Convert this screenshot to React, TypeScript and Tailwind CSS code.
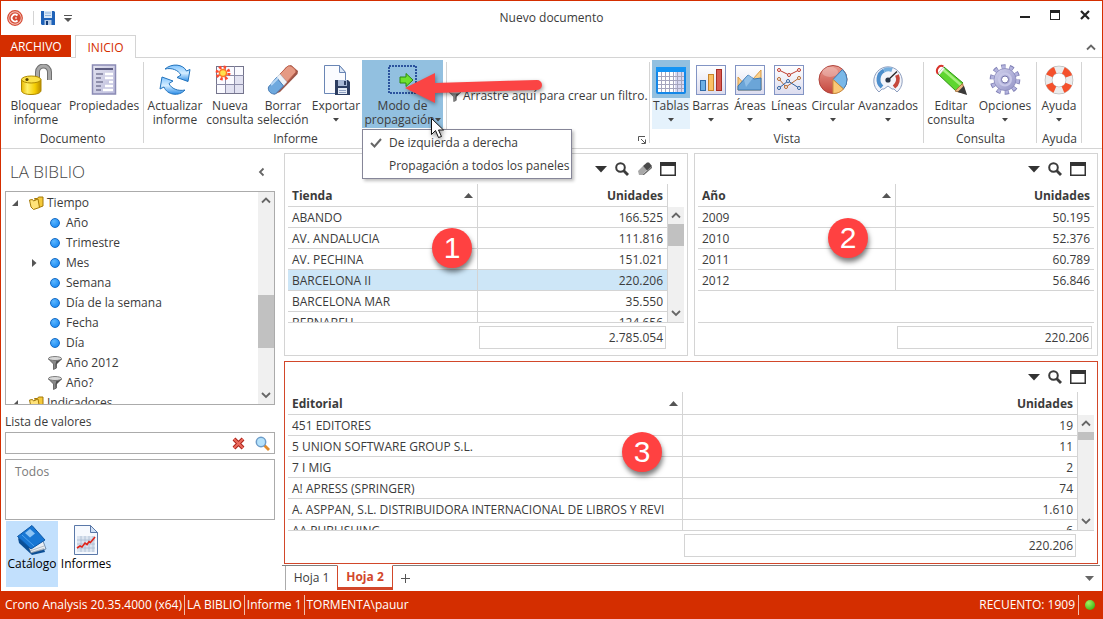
import React, { useState } from 'react';
import { clsx } from 'clsx';

type Row = { name: string; value: string };

interface GridPanelProps {
  column: string;
  rows: Row[];
  total: string;
  badge: string;
  badgeClass: string;
  selected?: string;
  thumbClass?: string;
  active?: boolean;
  eraser?: boolean;
  className?: string;
}

const tiendas: Row[] = [
  { name: 'ABANDO', value: '166.525' },
  { name: 'AV. ANDALUCIA', value: '111.816' },
  { name: 'AV. PECHINA', value: '151.021' },
  { name: 'BARCELONA II', value: '220.206' },
  { name: 'BARCELONA MAR', value: '35.550' },
  { name: 'BERNABEU', value: '124.656' },
];

const anios: Row[] = [
  { name: '2009', value: '50.195' },
  { name: '2010', value: '52.376' },
  { name: '2011', value: '60.789' },
  { name: '2012', value: '56.846' },
];

const editoriales: Row[] = [
  { name: '451 EDITORES', value: '19' },
  { name: '5 UNION SOFTWARE GROUP S.L.', value: '11' },
  { name: '7 I MIG', value: '2' },
  { name: 'A! APRESS (SPRINGER)', value: '74' },
  { name: 'A. ASPPAN, S.L. DISTRIBUIDORA INTERNACIONAL DE LIBROS Y REVI', value: '1.610' },
  { name: 'AA PUBLISHING', value: '6' },
];

const treeItems = [
  { label: 'Año', kind: 'dot' },
  { label: 'Trimestre', kind: 'dot' },
  { label: 'Mes', kind: 'dot', expandable: true },
  { label: 'Semana', kind: 'dot' },
  { label: 'Día de la semana', kind: 'dot' },
  { label: 'Fecha', kind: 'dot' },
  { label: 'Día', kind: 'dot' },
  { label: 'Año 2012', kind: 'filter' },
  { label: 'Año?', kind: 'filter' },
];

/* ---------- Ribbon icons (32x32) ---------- */

function Icon32({ children }: { children: React.ReactNode }) {
  return (
    <svg width="32" height="32" viewBox="0 0 32 32" className="block shrink-0" aria-hidden="true">
      {children}
    </svg>
  );
}

function LockIcon() {
  return (
    <Icon32>
      <defs>
        <linearGradient id="gold" x1="0" x2="1">
          <stop offset="0" stopColor="#e8b800" />
          <stop offset="0.3" stopColor="#fff06a" />
          <stop offset="0.7" stopColor="#f5cd00" />
          <stop offset="1" stopColor="#b88a00" />
        </linearGradient>
      </defs>
      <path d="M17.500 15V8a5.500 5.500 0 0 1 12 0v8" fill="none" stroke="#6f6f6f" strokeWidth="5" />
      <path d="M17.500 15V8a5.500 5.500 0 0 1 12 0v8" fill="none" stroke="#a9a9a9" strokeWidth="3" />
      <path d="M1.500 15.500v11c0 2.500 4 4 9.500 4s10-1.500 10-4v-11z" fill="url(#gold)" stroke="#b08a00" />
      <ellipse cx="11.200" cy="15.500" rx="9.700" ry="3.500" fill="#fbe14a" stroke="#b08a00" />
      <circle cx="7" cy="15.500" r="1.600" fill="#5b4300" />
    </Icon32>
  );
}

function PropertiesIcon() {
  return (
    <Icon32>
      <defs>
        <linearGradient id="props" x1="0" y1="0" x2="1" y2="1">
          <stop offset="0" stopColor="#e4e4f0" />
          <stop offset="1" stopColor="#b9b9da" />
        </linearGradient>
      </defs>
      <rect x="4.500" y="1" width="23" height="29" fill="url(#props)" stroke="#8b8bb5" strokeWidth="1.500" />
      <rect x="7" y="4" width="18" height="2" fill="#5c5c80" />
      <path d="M8 10h7M8 14h5M8 18h7M8 22h5M8 26h5" stroke="#4d4d70" />
      <path d="M17 10h8M17 14h8M21 18h4M17 22h8M15 26h10" stroke="#fff" strokeWidth="2.600" />
    </Icon32>
  );
}

function RefreshIcon() {
  return (
    <Icon32>
      <defs>
        <linearGradient id="refresh" x1="0" y1="0" x2="0" y2="1">
          <stop offset="0" stopColor="#7fc4ff" />
          <stop offset="0.5" stopColor="#d5edff" />
          <stop offset="1" stopColor="#2b8de8" />
        </linearGradient>
      </defs>
      <path d="M6 5C13-1 24 0 27.500 7l3.500-1.500-2 12-11-4 4-2.500C19 6 13 3.500 6 5z" fill="url(#refresh)" stroke="#2273bd" strokeLinejoin="round" />
      <path d="M26 26C20 33 8 31 5 23l-4 2 2-12 11 4-4 2.500c2 5 9 8 16 6.500z" fill="url(#refresh)" stroke="#2273bd" strokeLinejoin="round" />
    </Icon32>
  );
}

function NewQueryIcon() {
  return (
    <Icon32>
      <rect x="2.500" y="2.500" width="27" height="27" fill="#fafaff" stroke="#74748c" />
      <path d="M2 11.500h28M2 20.500h28M11.500 2v27M20.500 2v27" stroke="#8c8ca8" />
      <path d="M21 12h8v8h-8zM12 21h8v8h-8zM21 21h8v8h-8z" fill="#e2e2f1" />
      <circle cx="9" cy="9" r="6" fill="none" stroke="#ff4a30" strokeWidth="3" strokeDasharray="2.500 2.200" />
      <circle cx="9" cy="9" r="4.300" fill="#ff7a20" />
      <circle cx="9" cy="9" r="2.800" fill="#ffe14d" />
    </Icon32>
  );
}

function EraserIcon() {
  return (
    <Icon32>
      <path d="M19 3l5-2 7 6-.5 3L13 28l-6 2.500-6-6z" fill="#9c5548" />
      <path d="M13 10l8-8c3-1 8 3 8 6l-9 10z" fill="#e59a84" stroke="#c0644f" />
      <path d="M9.500 13.500L13 10l7 8-3.500 4z" fill="#eef3f8" stroke="#b9c5d4" strokeWidth="0.600" />
      <path d="M9.500 13.500l7 8.500-8 8C4 30.500.5 27 1.500 23z" fill="#6fa9de" stroke="#4a7fb8" />
      <path d="M4 21l7-7" stroke="#b5d6f5" strokeWidth="2" />
    </Icon32>
  );
}

function ExportIcon() {
  return (
    <Icon32>
      <path d="M4.500 1.500h15l6 7v21h-21z" fill="#fbfcff" stroke="#6a86b5" />
      <path d="M19.500 1.500v7h6z" fill="#dde8f7" stroke="#6a86b5" />
      <path d="M15 16h13l2 2v13H15z" fill="#2d3e62" />
      <path d="M18 16h9v6h-9z" fill="#a9b9d6" />
      <path d="M24 17h2v4h-2z" fill="#2d3e62" />
      <path d="M18 24h9v6h-9z" fill="#e6ecf6" />
      <path d="M19 26.500h7M19 28.500h7" stroke="#8fa1c2" />
    </Icon32>
  );
}

function PropagationIcon() {
  return (
    <Icon32>
      <rect x="2" y="2" width="27" height="27" fill="none" stroke="#0b2f86" strokeWidth="1.500" strokeDasharray="2 1" />
      <path d="M13 13h6V9.500l7 6.500-7 6.500V19h-6z" fill="#6fe02f" stroke="#2c8a10" />
    </Icon32>
  );
}

function TableIcon() {
  return (
    <Icon32>
      <rect x="2" y="4" width="28" height="25" rx="1" fill="#fff" stroke="#1387e8" strokeWidth="2" />
      <path d="M20 8h9v20h-9z" fill="#d9d9f2" />
      <path d="M3 12.500h26M3 16.500h26M3 20.500h26M3 24.500h26M6.500 8v20M10.500 8v20M14.500 8v20M18.500 8v20M22.500 8v20M26.500 8v20" stroke="#a5a5bd" />
      <rect x="1" y="3" width="30" height="5" fill="#1494f4" />
    </Icon32>
  );
}

function ChartFrame({ children }: { children: React.ReactNode }) {
  return (
    <Icon32>
      <defs>
        <linearGradient id="frame" x1="0" y1="0" x2="0" y2="1">
          <stop offset="0" stopColor="#ffffff" />
          <stop offset="1" stopColor="#dcdcee" />
        </linearGradient>
      </defs>
      <rect x="1.500" y="1.500" width="29" height="29" fill="url(#frame)" stroke="#8294c4" />
      {children}
    </Icon32>
  );
}

function BarsIcon() {
  return (
    <ChartFrame>
      <rect x="5.500" y="16.500" width="5" height="10" fill="#6cb0e6" stroke="#2f6ba8" />
      <rect x="13.500" y="10.500" width="5" height="16" fill="#fbc266" stroke="#c8842c" />
      <rect x="21.500" y="5.500" width="5" height="21" fill="#d85a50" stroke="#a52d26" />
    </ChartFrame>
  );
}

function AreasIcon() {
  return (
    <ChartFrame>
      <path d="M4 13l7 8 8-6 8-9v20H4z" fill="#fbd08a" stroke="#d99a45" />
      <path d="M4 22l10-11 6 4 7-1v12H4z" fill="#6ba5d8" stroke="#3a76b0" />
      <path d="M10 16l4-5 5 3-7 9z" fill="#a9d0f2" opacity="0.6" />
    </ChartFrame>
  );
}

function LinesIcon() {
  return (
    <ChartFrame>
      <path d="M6 6l10 5 10-5" fill="none" stroke="#c0392b" />
      <path d="M6 15l7 8 13-9" fill="none" stroke="#b5652c" />
      <path d="M6 24l9-7 11 7" fill="none" stroke="#2e5f9e" />
      <g fill="#fff">
        <g stroke="#c0392b">
          <circle cx="6" cy="6" r="1.500" />
          <circle cx="16" cy="11" r="1.500" />
          <circle cx="26" cy="6" r="1.500" />
        </g>
        <g stroke="#b5652c">
          <circle cx="6" cy="15" r="1.500" />
          <circle cx="13" cy="23" r="1.500" />
          <circle cx="26" cy="14" r="1.500" />
        </g>
        <g stroke="#2e5f9e">
          <circle cx="6" cy="24" r="1.500" />
          <circle cx="15" cy="17" r="1.500" />
          <circle cx="26" cy="24" r="1.500" />
        </g>
      </g>
    </ChartFrame>
  );
}

function PieIcon() {
  return (
    <Icon32>
      <defs>
        <linearGradient id="pie" x1="0" y1="0" x2="0" y2="1">
          <stop offset="0" stopColor="#e99b90" />
          <stop offset="1" stopColor="#c4463c" />
        </linearGradient>
      </defs>
      <circle cx="16" cy="15.500" r="14" fill="url(#pie)" stroke="#b0443c" />
      <path d="M16 15.500L25.500 5.500A14 14 0 0 1 26.500 25z" fill="#7ab8e8" stroke="#3d7db5" />
      <path d="M16 15.500L26.500 25A14 14 0 0 1 16 29.500z" fill="#fbc876" stroke="#c98d3f" />
      <ellipse cx="13" cy="8" rx="8" ry="5" fill="#fff" opacity="0.25" />
    </Icon32>
  );
}

function GaugeIcon() {
  return (
    <Icon32>
      <path d="M7 28A14.200 14.200 0 1 1 25 28l-3-3h-2l-4-3-4 3h-2z" fill="#f3f4fa" stroke="#8fa0c0" />
      <path d="M10 23A10 10 0 0 1 12 6.500" fill="none" stroke="#4d8fcd" strokeWidth="4" />
      <path d="M12 6.500a10 10 0 0 1 8-.5" fill="none" stroke="#74aede" strokeWidth="4" />
      <path d="M25 11a10 10 0 0 1-3 12" fill="none" stroke="#c5473c" strokeWidth="4" />
      <path d="M15 17L25 7.500" stroke="#262626" strokeWidth="1.300" />
      <circle cx="16" cy="16" r="2.600" fill="#2c3545" />
    </Icon32>
  );
}

function PencilIcon() {
  return (
    <Icon32>
      <path d="M9 3L28 19l-7 8L3 10z" fill="#5ed62f" stroke="#2e9413" />
      <path d="M8 5.500L26 21" stroke="#a5f07d" strokeWidth="2.500" />
      <path d="M3 10C0 6 4 0 8.500 2.500" fill="none" stroke="#d8322a" strokeWidth="2" />
      <path d="M3.500 9L8 3.500l1.500 1.200-5 6z" fill="#fff" stroke="#c9c9c9" strokeWidth="0.700" />
      <path d="M27.500 19.500l3 10L20 27z" fill="#e9b883" stroke="#a8743f" />
      <path d="M28.500 23.500l2 6-6-2z" fill="#3a3a3a" stroke="#3a3a3a" strokeWidth="2" />
    </Icon32>
  );
}

function GearIcon() {
  return (
    <Icon32>
      <defs>
        <linearGradient id="gear" x1="0" y1="0" x2="1" y2="1">
          <stop offset="0" stopColor="#d3d3ee" />
          <stop offset="1" stopColor="#9393c6" />
        </linearGradient>
      </defs>
      <circle cx="16" cy="15.500" r="12.800" fill="none" stroke="#7f7fb4" strokeWidth="5" strokeDasharray="4.200 3.842" />
      <circle cx="16" cy="15.500" r="12.600" fill="none" stroke="#b4b4de" strokeWidth="3.500" strokeDasharray="3 4.917" strokeDashoffset="-0.500" />
      <circle cx="16" cy="15.500" r="11" fill="url(#gear)" stroke="#8a8abb" strokeWidth="0.800" />
      <circle cx="16" cy="15.500" r="6" fill="none" stroke="#c8c8e8" strokeWidth="2" />
      <circle cx="16" cy="15.500" r="3.500" fill="#fff" stroke="#7272a8" />
    </Icon32>
  );
}

function HelpIcon() {
  return (
    <Icon32>
      <circle cx="16" cy="16" r="10.500" fill="none" stroke="#a3a3a3" strokeWidth="7.500" />
      <circle cx="16" cy="16" r="10.500" fill="none" stroke="#ececec" strokeWidth="6.500" />
      <circle cx="16" cy="16" r="10.500" fill="none" stroke="#f4512c" strokeWidth="6.800" strokeDasharray="8.250 8.243" strokeDashoffset="-4.100" />
    </Icon32>
  );
}

/* ---------- Small icons ---------- */

function CaretDown({ className }: { className?: string }) {
  return (
    <svg width="6" height="4" viewBox="0 0 6 4" className={className} aria-hidden="true">
      <path d="M0 0h6L3 3.500z" fill="#444" />
    </svg>
  );
}

function Chevron({ direction }: { direction: 'up' | 'down' | 'left' }) {
  const paths = { up: 'M1 6.500l4-4 4 4', down: 'M1 3l4 4 4-4', left: 'M6.500 1.500L3 5l3.500 3.500' };
  return (
    <svg width="10" height="10" viewBox="0 0 10 10" className="block" aria-hidden="true">
      <path d={paths[direction]} fill="none" stroke="#666" strokeWidth="1.800" />
    </svg>
  );
}

function FunnelIcon({ size }: { size: number }) {
  return (
    <svg width={size} height={size} viewBox="0 0 14 14" className="block shrink-0" aria-hidden="true">
      <path d="M.5 3l5 5v5.500l3-1.500V8l5-5z" fill="#8a8a8a" stroke="#555" strokeWidth="0.800" />
      <path d="M8.500 8l5-5H9L7.500 8v5z" fill="#4b4b4b" />
      <ellipse cx="7" cy="2.500" rx="6.500" ry="2" fill="#d8d8d8" stroke="#666" strokeWidth="0.800" />
    </svg>
  );
}

function FolderIcon() {
  return (
    <svg width="15" height="14" viewBox="0 0 15 14" className="block shrink-0" aria-hidden="true">
      <path d="M5.500 2.500h3l1-1.500h4.500v9l-4 1.500z" fill="#f5c93a" stroke="#a37808" />
      <path d="M.5 4l3-.5 1 1.500 4.500-2 1.500 8.500-6 2L2 11z" fill="#ffe37a" stroke="#a37808" />
    </svg>
  );
}

function SearchGlyph() {
  return (
    <svg width="14" height="14" viewBox="0 0 14 14" className="block" aria-hidden="true">
      <circle cx="5.500" cy="5.500" r="4.300" fill="none" stroke="#3b3b3b" strokeWidth="2" />
      <path d="M8.500 8.500l4.500 4.500" stroke="#3b3b3b" strokeWidth="2.800" />
    </svg>
  );
}

function EraserGlyph() {
  return (
    <svg width="15" height="14" viewBox="0 0 15 14" className="block" aria-hidden="true">
      <path d="M1 9l5-5 4 4-5 5H2z" fill="#a8a8a8" />
      <path d="M6 4l4-3.500h2L15 4l-5 4.500z" fill="#4a4a4a" />
      <path d="M5 13l10-9v2L7 13z" fill="#6d6d6d" />
    </svg>
  );
}

function WindowGlyph() {
  return (
    <svg width="16" height="14" viewBox="0 0 16 14" className="block" aria-hidden="true">
      <path d="M0 0h16v14H0zM1.500 4v8.500h13V4z" fill="#333" fillRule="evenodd" />
    </svg>
  );
}

function BookIcon() {
  return (
    <Icon32>
      <path d="M2 14l1 5 13 12 13-3-1-3z" fill="#0b4f96" />
      <path d="M15 29l15-4-3-8-14 7z" fill="#e9eef4" stroke="#4a6a8c" strokeWidth="0.700" />
      <path d="M14 27l14-5M15 28.500l13-4" stroke="#9aa7b5" strokeWidth="0.700" />
      <path d="M16 1.500L29 16l-14 9L1.500 12.500z" fill="#1877d4" stroke="#0d57a6" />
      <path d="M6 11L18 22" stroke="#4fa3f0" />
      <path d="M14 5l5 4.500-5 4L9 9z" fill="#8cc4f5" />
    </Icon32>
  );
}

function ReportIcon() {
  return (
    <Icon32>
      <path d="M4.500 1.500h16l7 7v22h-23z" fill="#f6f9fe" stroke="#5a78a8" />
      <path d="M20.500 1.500v7h7z" fill="#cfe0f5" stroke="#5a78a8" />
      <rect x="7" y="12" width="18" height="16" fill="#dbe4f0" />
      <path d="M7 16h18M7 20h18M7 24h18M11 12v16M15 12v16M19 12v16M23 12v16" stroke="#a9bad0" strokeWidth="0.800" />
      <path d="M7 24l3-2 2 1 3-4 2 1.500 2-3 1.500 1L25 13" fill="none" stroke="#e0251b" strokeWidth="1.600" />
    </Icon32>
  );
}

/* ---------- Ribbon ---------- */

interface RibbonButtonProps {
  icon: React.ReactNode;
  lines: string[];
  className: string;
  caret?: boolean;
  inlineCaret?: boolean;
}

function RibbonButton({ icon, lines, className, caret, inlineCaret }: RibbonButtonProps) {
  return (
    <button type="button" className={clsx('flex h-[68px] flex-col items-center pt-1 leading-[14px]', className)}>
      {icon}
      <span className="mt-[3px] flex flex-col items-center whitespace-nowrap">
        {lines.map((line, i) => (
          <span key={line} className="flex items-center">
            {line}
            {inlineCaret && i === lines.length - 1 && <CaretDown />}
          </span>
        ))}
      </span>
      {caret && <CaretDown className="mt-[5px]" />}
    </button>
  );
}

function RibbonGroup({ title, className, children }: { title?: string; className?: string; children: React.ReactNode }) {
  return (
    <div className={clsx('relative flex shrink-0 flex-col', className)}>
      <div className="flex flex-1 pl-[2px] pt-[2px]">{children}</div>
      <div className="h-[19px] text-center leading-5">{title}</div>
      <div className="absolute right-0 top-1 h-[81px] w-px bg-[#d4d4d4]" />
    </div>
  );
}

function ModeMenu() {
  const options = ['De izquierda a derecha', 'Propagación a todos los paneles'];
  return (
    <div role="menu" className="absolute left-0 top-[69px] z-20 w-[210px] border border-[#868698] bg-white py-px shadow-[2px_2px_3px_rgba(0,0,0,0.25)]">
      {options.map((option, i) => (
        <button key={option} type="button" role="menuitem" className="flex h-[23px] w-full items-center whitespace-nowrap text-left">
          <span className="flex w-[26px] shrink-0 justify-center">
            {i === 0 && (
              <svg width="12" height="10" viewBox="0 0 12 10" aria-hidden="true">
                <path d="M1 5l3.500 3.500L11 1" fill="none" stroke="#666" strokeWidth="2" />
              </svg>
            )}
          </span>
          {option}
        </button>
      ))}
    </div>
  );
}

function Ribbon() {
  return (
    <div className="flex h-[91px] shrink-0 border-b border-[#d4d4d4]">
      <RibbonGroup title="Documento" className="w-[143px]">
        <RibbonButton icon={<LockIcon />} lines={['Bloquear', 'informe']} className="w-[66px]" />
        <RibbonButton icon={<PropertiesIcon />} lines={['Propiedades']} className="w-[70px]" />
      </RibbonGroup>
      <RibbonGroup title="Informe" className="w-[303px]">
        <RibbonButton icon={<RefreshIcon />} lines={['Actualizar', 'informe']} className="w-[58px]" />
        <RibbonButton icon={<NewQueryIcon />} lines={['Nueva', 'consulta']} className="w-[52px]" />
        <RibbonButton icon={<EraserIcon />} lines={['Borrar', 'selección']} className="w-[54px]" />
        <RibbonButton icon={<ExportIcon />} lines={['Exportar']} caret className="w-[52px]" />
        <div className="relative">
          <RibbonButton icon={<PropagationIcon />} lines={['Modo de', 'propagación']} inlineCaret className="w-[81px] bg-[#92c0e0]" />
          <ModeMenu />
          {/* Annotation arrow and mouse pointer */}
          <svg width="190" height="90" viewBox="0 0 190 90" className="pointer-events-none absolute left-0 top-0 z-30 drop-shadow-[1px_2px_2px_rgba(0,0,0,0.4)]" aria-hidden="true">
            <path d="M43 28L73 13v10l102-3a5 5 0 0 1 0 10L73 33v10z" fill="#fb4444" />
            <path d="M69.500 58.500v16l4-4 3 7 3-1-3-6.500h5z" fill="#fff" stroke="#111" />
          </svg>
        </div>
      </RibbonGroup>
      <RibbonGroup className="w-[203px]">
        <div className="mt-[26px] flex h-5 items-center gap-[2px] whitespace-nowrap">
          <FunnelIcon size={12} />
          <span>Arrastre aquí para crear un filtro.</span>
        </div>
        <button type="button" aria-label="Opciones de filtro" className="absolute bottom-1 right-1">
          <svg width="8" height="8" viewBox="0 0 8 8" className="block">
            <path d="M.5 5V.5H7M3 3l4 4M7.500 3.500v4h-4" fill="none" stroke="#555" />
          </svg>
        </button>
      </RibbonGroup>
      <RibbonGroup title="Vista" className="w-[274px]">
        <div className="bg-[linear-gradient(#92c0e0_38px,#e5f2fc_38px)]">
          <RibbonButton icon={<TableIcon />} lines={['Tablas']} caret className="w-[38px]" />
        </div>
        <RibbonButton icon={<BarsIcon />} lines={['Barras']} caret className="w-[41px]" />
        <RibbonButton icon={<AreasIcon />} lines={['Áreas']} caret className="w-[38px]" />
        <RibbonButton icon={<LinesIcon />} lines={['Líneas']} caret className="w-[40px]" />
        <RibbonButton icon={<PieIcon />} lines={['Circular']} caret className="w-[48px]" />
        <RibbonButton icon={<GaugeIcon />} lines={['Avanzados']} caret className="w-[62px]" />
      </RibbonGroup>
      <RibbonGroup title="Consulta" className="w-[113px]">
        <RibbonButton icon={<PencilIcon />} lines={['Editar', 'consulta']} className="w-[50px]" />
        <RibbonButton icon={<GearIcon />} lines={['Opciones']} caret className="w-[58px]" />
      </RibbonGroup>
      <RibbonGroup title="Ayuda" className="w-[45px]">
        <RibbonButton icon={<HelpIcon />} lines={['Ayuda']} caret className="w-[40px]" />
      </RibbonGroup>
    </div>
  );
}

/* ---------- Title bar and ribbon tabs ---------- */

function TitleBar() {
  return (
    <header className="grid h-[34px] shrink-0 grid-cols-[1fr_auto_1fr] items-center">
      <div className="flex items-center pl-[6px]">
        <svg width="16" height="16" viewBox="0 0 16 16" aria-hidden="true">
          <circle cx="8" cy="8" r="7.300" fill="#f5c9c0" stroke="#d64a33" strokeWidth="1.200" />
          <circle cx="8" cy="8" r="5.800" fill="#d64a33" />
          <path d="M10.500 5.500a3.500 3.500 0 1 0 0 5" fill="none" stroke="#fff" strokeWidth="1.800" />
          <path d="M10 8H8" stroke="#f5c9c0" strokeWidth="1.500" />
        </svg>
        <span className="ml-[10px] h-[14px] w-px bg-[#d4d4d4]" />
        <button type="button" aria-label="Guardar" className="ml-[7px]">
          <svg width="14" height="14" viewBox="0 0 14 14" className="block">
            <path d="M0 0h13l1 1v13H1l-1-1z" fill="#1e62b8" />
            <path d="M3 0h8v7H3z" fill="#d9e8f7" />
            <path d="M4 2h6M4 4.500h6" stroke="#8fb4dc" />
            <path d="M3.500 9h7v5h-7z" fill="#b8cde6" />
            <path d="M5 10h2v4H5z" fill="#123a78" />
          </svg>
        </button>
        <button type="button" aria-label="Personalizar" className="ml-[9px]">
          <svg width="8" height="7" viewBox="0 0 8 7" className="block">
            <path d="M0 .5h8" stroke="#555" />
            <path d="M0 3h8L4 7z" fill="#555" />
          </svg>
        </button>
      </div>
      <h1>Nuevo documento</h1>
      <div className="flex items-center justify-end gap-5 pb-[6px] pr-3">
        <button type="button" aria-label="Minimizar">
          <svg width="10" height="10" viewBox="0 0 10 10" className="block"><path d="M0 7h10" stroke="#222" strokeWidth="2" /></svg>
        </button>
        <button type="button" aria-label="Maximizar">
          <svg width="10" height="10" viewBox="0 0 10 10" className="block"><path d="M0 0h10v10H0zM1 3v6h8V3z" fill="#222" fillRule="evenodd" /></svg>
        </button>
        <button type="button" aria-label="Cerrar">
          <svg width="10" height="10" viewBox="0 0 10 10" className="block"><path d="M1 1l8 8M9 1L1 9" stroke="#222" strokeWidth="2.200" /></svg>
        </button>
      </div>
    </header>
  );
}

function RibbonTabs() {
  return (
    <div className="flex h-[23px] shrink-0 items-stretch">
      <button type="button" className="h-[22px] w-[70px] bg-[#d42e00] pt-px text-white">ARCHIVO</button>
      <span className="w-1 border-b border-[#d4d4d4]" />
      <button type="button" className="w-[61px] border border-b-0 border-[#d4d4d4] pt-px text-[#d42e00]">INICIO</button>
      <div className="flex flex-1 items-center justify-end border-b border-[#d4d4d4] pr-[6px] pt-1">
        <button type="button" aria-label="Contraer cinta"><Chevron direction="up" /></button>
      </div>
    </div>
  );
}

/* ---------- Sidebar ---------- */

function ScrollBar({ thumbClass, className }: { thumbClass: string; className?: string }) {
  return (
    <div className={clsx('flex w-4 shrink-0 flex-col items-center justify-between bg-[#f0f0f0]', className)}>
      <div className="flex w-full flex-1 flex-col items-center pt-1">
        <Chevron direction="up" />
        <div className={clsx('w-full shrink-0 bg-[#c1c1c1]', thumbClass)} />
      </div>
      <div className="pb-1"><Chevron direction="down" /></div>
    </div>
  );
}

function ExpandedMark() {
  return (
    <svg width="6" height="6" viewBox="0 0 6 6" className="block" aria-hidden="true">
      <path d="M6 0v6H0z" fill="#555" />
    </svg>
  );
}

function Sidebar() {
  const [search, setSearch] = useState('');

  return (
    <aside className="flex w-[274px] shrink-0 flex-col pl-1">
      <div className="flex h-[42px] items-center justify-between pl-[5px] pr-2 pt-1">
        <h2 className="text-[17px] font-light leading-5 text-[#444]">LA BIBLIO</h2>
        <button type="button" aria-label="Ocultar panel"><Chevron direction="left" /></button>
      </div>

      {/* Árbol del catálogo */}
      <div className="flex min-h-0 flex-1 overflow-hidden border border-[#ababab]">
        <ul className="min-w-0 flex-1 pt-px leading-5">
          <li className="flex h-5 items-center">
            <span className="ml-[6px] mr-[11px]"><ExpandedMark /></span>
            <FolderIcon />
            <span className="ml-[3px]">Tiempo</span>
          </li>
          {treeItems.map((item) => (
            <li key={item.label} className="flex h-5 items-center pl-[26px]">
              <span className="w-4 shrink-0">
                {item.expandable && (
                  <svg width="5" height="8" viewBox="0 0 5 8" className="block" aria-hidden="true">
                    <path d="M0 0l4.500 4L0 8z" fill="#555" />
                  </svg>
                )}
              </span>
              <span className="mr-1 flex w-[14px] shrink-0 justify-center">
                {item.kind === 'dot' ? (
                  <span className="h-[10px] w-[10px] rounded-full border border-[#1369c4] bg-[radial-gradient(circle_at_35%_30%,#5cb6ff,#0b80f0)]" />
                ) : (
                  <FunnelIcon size={14} />
                )}
              </span>
              {item.label}
            </li>
          ))}
          <li className="flex h-5 items-center">
            <span className="ml-[6px] mr-[11px]"><ExpandedMark /></span>
            <FolderIcon />
            <span className="ml-[3px]">Indicadores</span>
          </li>
        </ul>
        <ScrollBar thumbClass="mt-[89px] h-[53px]" />
      </div>

      {/* Lista de valores */}
      <label htmlFor="valores" className="flex h-[27px] shrink-0 items-center pt-[7px]">Lista de valores</label>
      <div className="flex h-[22px] shrink-0 items-center border border-[#ababab] pr-1">
        <input
          id="valores"
          type="text"
          value={search}
          onChange={(e) => setSearch(e.target.value)}
          className="min-w-0 flex-1 px-2 outline-none"
        />
        <button type="button" aria-label="Borrar">
          <svg width="13" height="13" viewBox="0 0 13 13" className="block">
            <path d="M2 2l9 9M11 2l-9 9" stroke="#a82018" strokeWidth="4" />
            <path d="M2 2l9 9M11 2l-9 9" stroke="#ea6a5c" strokeWidth="2.200" />
          </svg>
        </button>
        <button type="button" aria-label="Buscar" className="ml-[10px]">
          <svg width="15" height="15" viewBox="0 0 15 15" className="block">
            <path d="M9 9l5 5" stroke="#e08a2a" strokeWidth="2.800" />
            <circle cx="6" cy="6" r="4.700" fill="#b5e2fb" stroke="#6d9cc9" strokeWidth="1.500" />
          </svg>
        </button>
      </div>
      <div className="mt-[5px] h-[61px] shrink-0 border border-[#ababab] pl-[9px] pt-1 text-[#7a7a7a]">Todos</div>

      <div className="flex shrink-0 gap-px pb-1 pl-px pt-px text-black">
        <button type="button" className="flex h-[66px] w-[52px] flex-col items-center bg-[#c2e0fd] pt-[3px]">
          <BookIcon />
          <span className="leading-4">Catálogo</span>
        </button>
        <button type="button" className="flex h-[66px] w-[54px] flex-col items-center pt-[3px]">
          <ReportIcon />
          <span className="leading-4">Informes</span>
        </button>
      </div>
    </aside>
  );
}

/* ---------- Data panels ---------- */

function GridPanel({ column, rows, total, badge, badgeClass, selected, thumbClass, active, eraser, className }: GridPanelProps) {
  return (
    <section className={clsx('relative flex min-h-0 flex-col border px-[3px]', active ? 'border-[#d2472a]' : 'border-[#d4d4d4]', className)}>
      <div className="flex h-[30px] shrink-0 items-center justify-end gap-2 pr-2">
        <button type="button" aria-label="Menú">
          <svg width="12" height="7" viewBox="0 0 12 7" className="block"><path d="M0 0h12L6 6.500z" fill="#333" /></svg>
        </button>
        <button type="button" aria-label="Buscar"><SearchGlyph /></button>
        {eraser && <button type="button" aria-label="Borrar selección"><EraserGlyph /></button>}
        <button type="button" aria-label="Maximizar"><WindowGlyph /></button>
      </div>

      <div className="flex min-h-0 flex-1 overflow-hidden border-b border-[#d4d4d4]">
        <div className="min-w-0 flex-1">
          <table className="w-full table-fixed border-separate border-spacing-0">
            <thead>
              <tr className="h-[23px]">
                <th className="border-b border-r border-[#d4d4d4] px-1 pt-px text-left font-bold">
                  <span className="flex items-center justify-between">
                    {column}
                    <svg width="9" height="5" viewBox="0 0 9 5" aria-hidden="true"><path d="M0 5h9L4.500 0z" fill="#555" /></svg>
                  </span>
                </th>
                <th className={clsx('border-b border-[#d4d4d4] px-1 pt-px text-right font-bold', thumbClass && 'border-r')}>Unidades</th>
              </tr>
            </thead>
            <tbody>
              {rows.map((row) => (
                <tr key={row.name} className={clsx('h-[21px]', row.name === selected && 'bg-[#cde6f7]')}>
                  <td className="whitespace-nowrap border-b border-r border-[#d4d4d4] px-1 pb-px pt-[3px]">{row.name}</td>
                  <td className={clsx('border-b border-[#d4d4d4] px-1 pb-px pt-[3px] text-right', thumbClass && 'border-r')}>{row.value}</td>
                </tr>
              ))}
            </tbody>
          </table>
        </div>
        {thumbClass && <ScrollBar className="mt-[23px]" thumbClass={thumbClass} />}
      </div>

      <div className={clsx('grid shrink-0 grid-cols-2 pb-[6px] pt-[3px]', thumbClass && 'pr-4')}>
        <output className="col-start-2 ml-px mr-[2px] flex h-[23px] items-center justify-end border border-[#d4d4d4] pr-[2px] pt-px">{total}</output>
      </div>

      <div className={clsx('absolute flex h-10 w-10 items-center justify-center rounded-full bg-[#ff4141] font-["Liberation_Sans",sans-serif] text-[30px] leading-none text-white shadow-[1px_4px_5px_rgba(0,0,0,0.5)]', badgeClass)}>
        {badge}
      </div>
    </section>
  );
}

function SheetTabs() {
  return (
    <div className="mx-[-2px] flex h-[26px] shrink-0 items-start border-t border-[#808080] pl-[3px]">
      <button type="button" className="h-6 w-[52px] border-l border-[#ababab]">Hoja 1</button>
      <button type="button" className="mt-[-1px] h-[25px] w-[56px] border border-b-[3px] border-t-white border-[#d2472a] bg-white pt-px font-bold text-[#d2472a]">Hoja 2</button>
      <button type="button" aria-label="Nueva hoja" className="flex h-6 w-6 items-center justify-center">
        <svg width="9" height="9" viewBox="0 0 9 9"><path d="M4.500 0v9M0 4.500h9" stroke="#555" /></svg>
      </button>
      <button type="button" aria-label="Lista de hojas" className="ml-auto flex h-6 items-center pr-[6px]">
        <svg width="9" height="5" viewBox="0 0 9 5"><path d="M0 0h9L4.500 5z" fill="#666" /></svg>
      </button>
    </div>
  );
}

function StatusBar() {
  return (
    <footer className="flex h-[27px] shrink-0 items-center whitespace-nowrap bg-[#d42e00] pl-1 pt-px text-white">
      <span>Crono Analysis 20.35.4000 (x64)</span>
      <span className="mx-[2px] h-5 w-px bg-[#f0c0b0]" />
      <span>LA BIBLIO</span>
      <span className="mx-[2px] h-5 w-px bg-[#f0c0b0]" />
      <span>Informe 1</span>
      <span className="mx-[2px] h-5 w-px bg-[#f0c0b0]" />
      <span>TORMENTA\pauur</span>
      <span className="ml-auto">RECUENTO: 1909</span>
      <span className="ml-[3px] h-5 w-px bg-[#f0c0b0]" />
      <span className="ml-[6px] mr-[7px] h-[10px] w-[10px] rounded-full bg-[radial-gradient(circle_at_35%_30%,#a4f060,#1fa800)]" />
    </footer>
  );
}

export default function App() {
  return (
    <div className='flex h-screen flex-col overflow-hidden border border-[#d42e00] bg-white font-["Open_Sans","Noto_Sans",sans-serif] text-[12px] leading-4 text-[#3b3b3b]'>
      <TitleBar />
      <RibbonTabs />
      <Ribbon />
      <div className="flex min-h-0 flex-1">
        <Sidebar />
        <main className="flex min-w-0 flex-1 flex-col pl-[9px] pr-1 pt-1">
          <div className="grid min-h-0 flex-1 grid-cols-2 grid-rows-2 gap-x-[6px] gap-y-[5px] pb-px">
            <GridPanel
              column="Tienda"
              rows={tiendas}
              total="2.785.054"
              badge="1"
              badgeClass="left-[147px] top-[74px]"
              selected="BARCELONA II"
              thumbClass="mt-[3px] h-[22px]"
              eraser
            />
            <GridPanel column="Año" rows={anios} total="220.206" badge="2" badgeClass="left-[133px] top-[64px]" />
            <GridPanel
              column="Editorial"
              rows={editoriales}
              total="220.206"
              badge="3"
              badgeClass="left-[337px] top-[70px]"
              thumbClass="mt-[3px] h-2"
              active
              className="col-span-2"
            />
          </div>
          <SheetTabs />
        </main>
      </div>
      <StatusBar />
    </div>
  );
}
